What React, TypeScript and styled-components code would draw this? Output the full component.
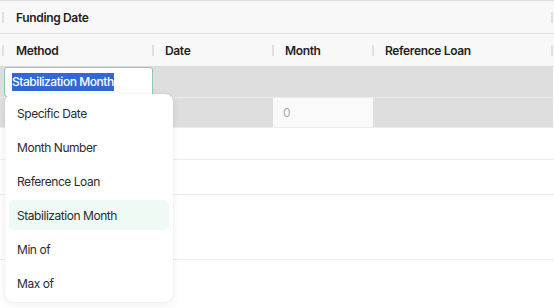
import React from 'react';
import styled, { createGlobalStyle } from 'styled-components';

const GlobalStyle = createGlobalStyle`
  html, body {
    margin: 0;
    padding: 0;
    background: #ffffff;
    font-family: Inter, "Noto Sans", sans-serif;
  }
`;

const Grid = styled.div`
  position: relative;
  width: 554px;
  height: 308px;
  overflow: hidden;
  border-top: 1px solid #dddddd;
  box-sizing: border-box;
  background: #ffffff;
`;

const HeaderRow = styled.div<{ $cols: string }>`
  display: grid;
  grid-template-columns: ${({ $cols }) => $cols};
  height: 32px;
  background: #f8f8f8;
  border-bottom: 1px solid #dddddd;
`;

const HeaderCell = styled.div<{ $first?: boolean }>`
  position: relative;
  display: flex;
  align-items: center;
  padding-left: ${({ $first }) => ($first ? '16px' : '12px')};
  font-size: 12px;
  font-weight: 600;
  letter-spacing: -0.35px;
  color: #1f1f1f;
  white-space: nowrap;

  &::before {
    content: '';
    position: absolute;
    left: ${({ $first }) => ($first ? '2px' : '-1px')};
    top: 11px;
    width: 2px;
    height: 11px;
    background: #e0e0e0;
  }
`;

const EndCell = styled.div`
  position: relative;

  &::before {
    content: '';
    position: absolute;
    left: -2px;
    top: 11px;
    width: 2px;
    height: 11px;
    background: #e0e0e0;
  }
`;

const Row = styled.div<{ $h: number; $grey?: boolean }>`
  display: grid;
  grid-template-columns: 153px 120px 100px 180px 1px;
  height: ${({ $h }) => $h}px;
  box-sizing: border-box;
  border-bottom: 1px solid #ececec;
  background: ${({ $grey }) => ($grey ? 'linear-gradient(to right, #dedede 553px, #ffffff 553px)' : '#ffffff')};
`;

const Cell = styled.div<{ $light?: boolean }>`
  display: flex;
  align-items: center;
  padding-left: 10px;
  font-size: 12px;
  color: #aaaaaa;
  background: ${({ $light }) => ($light ? '#fafafa' : 'transparent')};
`;

const EditorCell = styled.div`
  padding-left: 4px;
`;

const Editor = styled.div`
  height: 100%;
  box-sizing: border-box;
  border: 1px solid #8cc7ae;
  border-radius: 3px;
  background: #ffffff;
  display: flex;
  align-items: center;
  padding-left: 7px;
`;

const Selected = styled.span`
  background: #3366d6;
  color: #ffffff;
  font-size: 12px;
  font-weight: 500;
  letter-spacing: -0.45px;
  line-height: 18px;
`;

const Menu = styled.div`
  position: absolute;
  left: 5px;
  top: 93px;
  width: 168px;
  box-sizing: border-box;
  padding: 4px;
  display: flex;
  flex-direction: column;
  gap: 4px;
  background: #ffffff;
  border-radius: 8px;
  box-shadow: 0 2px 8px rgba(0, 0, 0, 0.08), 0 0 1px rgba(0, 0, 0, 0.12);
`;

const Item = styled.div<{ $active?: boolean }>`
  height: 30px;
  display: flex;
  align-items: center;
  padding-left: 8px;
  border-radius: 5px;
  font-size: 12px;
  letter-spacing: -0.45px;
  color: #2b2b2b;
  background: ${({ $active }) => ($active ? '#effaf5' : 'transparent')};
`;

const options = ['Specific Date', 'Month Number', 'Reference Loan', 'Stabilization Month', 'Min of', 'Max of'];
const colTemplate = '153px 120px 100px 180px 1fr';

const App: React.FC = () => {
  return (
    <>
      <GlobalStyle />
      <Grid>
        <HeaderRow $cols="1fr 1px">
          <HeaderCell $first>Funding Date</HeaderCell>
          <EndCell />
        </HeaderRow>
        <HeaderRow $cols={colTemplate}>
          <HeaderCell $first>Method</HeaderCell>
          <HeaderCell>Date</HeaderCell>
          <HeaderCell>Month</HeaderCell>
          <HeaderCell>Reference Loan</HeaderCell>
          <EndCell />
        </HeaderRow>

        <Row $h={31} $grey>
          <EditorCell>
            <Editor>
              <Selected>Stabilization Month</Selected>
            </Editor>
          </EditorCell>
          <Cell />
          <Cell />
          <Cell />
        </Row>
        <Row $h={30} $grey>
          <Cell />
          <Cell />
          <Cell $light>0</Cell>
          <Cell />
        </Row>
        <Row $h={32} />
        <Row $h={35} />
        <Row $h={65} />

        <Menu>
          {options.map((option) => (
            <Item key={option} $active={option === 'Stabilization Month'}>
              {option}
            </Item>
          ))}
        </Menu>
      </Grid>
    </>
  );
};

export default App;
